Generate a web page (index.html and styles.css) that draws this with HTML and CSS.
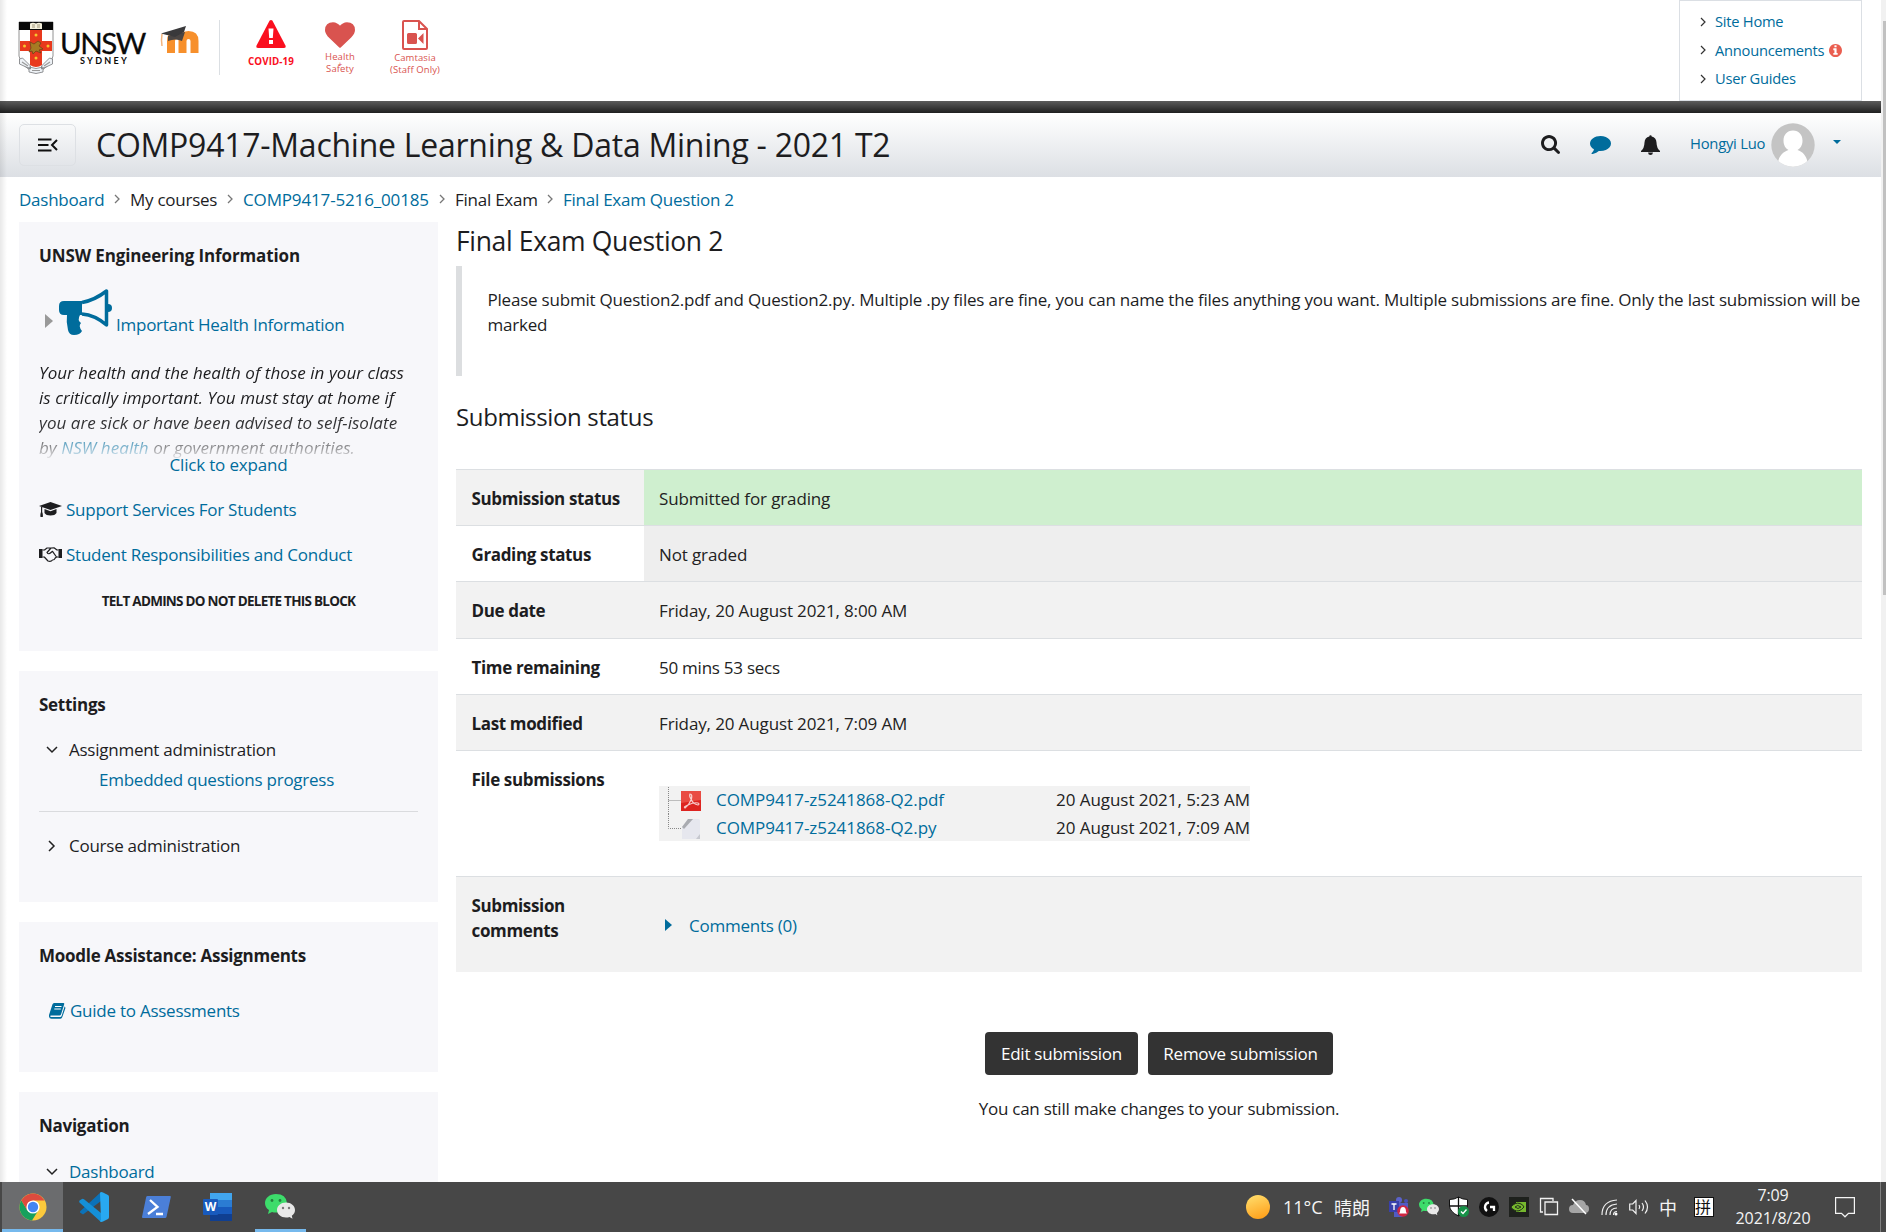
FILE: index.html
```html
<!DOCTYPE html>
<html lang="en">
<head>
<meta charset="utf-8">
<title>Final Exam Question 2</title>
<link rel="stylesheet" href="styles.css">
</head>
<body>
<div class="screen">
<div class="browser">
<div class="page">
  <header class="top">
    <svg class="crest" viewBox="0 0 34 52"><path d="M0 0h34v34q-2 11-17 17Q2 45 0 34z" fill="#fff" stroke="#777" stroke-width=".8"/><path d="M0 0h34v8H0z" fill="#080808"/><path d="M11 1.500q3-1.500 6 0 3-1.500 6 0v5.500H11z" fill="#f5f0dc"/><path d="M13 3h3M18 3h3M13 5h3M18 5h3" stroke="#8b8060" stroke-width=".8"/><path d="M11 8h12v11h10v10H23v14q-6 4-12 0V29H1V19h10z" fill="#e8391d"/><path d="M11 20l4 2 4-3 3 2-2 3 4 3-4 1 2 3-5-2-3 3-1-3-3 1 2-4z" fill="#a67b23" stroke="#63401a" stroke-width=".7"/><g fill="#f7c52d"><circle cx="17" cy="13" r="1.500"/><circle cx="5.500" cy="24" r="1.500"/><circle cx="29" cy="24" r="1.500"/><circle cx="17" cy="36" r="1.500"/></g><path d="M.5 37l3-1 8 8v3L.5 42zM33.500 37l-3-1-8 8v3l11-5zM10 45q7 3 14 0v5q-7 3-14 0z" fill="#eef2f6" stroke="#77797c" stroke-width=".8"/><path d="M3 40l6 4M31 40l-6 4M13 48.500h8" stroke="#999" stroke-width="1.200"/></svg>
    <div class="brand"><span class="unsw">UNSW</span><span class="sydney">SYDNEY</span></div>
    <svg class="moodle" viewBox="0 0 41 28"><path d="M11 27V15q0-6 6-6 5.500 0 5.500 6v12M22.500 15q0-6 6-6t6 6v12" fill="none" stroke="#f7902c" stroke-width="8"/><path d="M8 10v5q8-3 14 0l3-9z" fill="#4a4543"/><path d="M1 7.500L26 0l-2 6-9 5z" fill="#39393b"/><path d="M2 8q-1 6 0 12" fill="none" stroke="#f3b37c" stroke-width="1.500"/></svg>
    <div class="divider"></div>
    <div class="quick covid"><svg viewBox="0 0 30 28"><path d="M13.500.8q1.500-1.600 3 0L29.700 26q.5 2-1.700 2H2q-2.200 0-1.700-2z" fill="#fa0f1e"/><path d="M12.500 8.500h5l-.7 9.500h-3.600zM13 20h4v4h-4z" fill="#fff"/></svg><span>COVID-19</span></div>
    <div class="quick health"><svg viewBox="0 128 1792 1536"><path fill="#d9534f" d="M896 1664q-26 0-44-18l-624-602q-10-8-27.500-26t-55.500-65.500-68-97.500-53.500-121-23.500-138q0-220 127-344t351-124q62 0 126.500 21.500t120 58 95.500 68.500 76 68q36-36 76-68t95.500-68.500 120-58 126.500-21.500q224 0 351 124t127 344q0 221-229 450l-623 600q-18 18-44 18z"/></svg><span>Health</span><span class="plus">+</span><span>Safety</span></div>
    <div class="quick camtasia"><svg viewBox="0 0 26 30"><path d="M2 1h15l8 8v19q0 1-1 1H2q-1 0-1-1V2q0-1 1-1zM17 1v8h8" fill="none" stroke="#d9534f" stroke-width="2"/><path d="M5 14.500q0-1.500 1.500-1.500h7q1.500 0 1.500 1.500v8q0 1.500-1.500 1.500h-7Q5 24 5 22.500zM16 18.500l5.500-5.500v11z" fill="#d9534f"/></svg><span>Camtasia</span><span>(Staff Only)</span></div>
    <nav class="links">
      <a><svg viewBox="0 0 6 10"><path d="M1 1l4 4-4 4"/></svg>Site Home</a>
      <a><svg viewBox="0 0 6 10"><path d="M1 1l4 4-4 4"/></svg><span class="ann">Announcements</span><svg class="info" viewBox="128 128 1536 1536"><path d="M1152 1376v-160q0-14-9-23t-23-9h-96v-512q0-14-9-23t-23-9h-320q-14 0-23 9t-9 23v160q0 14 9 23t23 9h96v320h-96q-14 0-23 9t-9 23v160q0 14 9 23t23 9h448q14 0 23-9t9-23zm-128-896v-160q0-14-9-23t-23-9h-192q-14 0-23 9t-9 23v160q0 14 9 23t23 9h192q14 0 23-9t9-23zm640 416q0 209-103 385.500t-279.500 279.500-385.500 103-385.500-103-279.500-279.500-103-385.500 103-385.500 279.500-279.500 385.500-103 385.500 103 279.500 279.500 103 385.500z"/></svg></a>
      <a><svg viewBox="0 0 6 10"><path d="M1 1l4 4-4 4"/></svg>User Guides</a>
    </nav>
  </header>
  <div class="bar"></div>
  <div class="coursebar">
    <div class="drawer"><svg viewBox="0 0 20 14"><path d="M0 1.500h13.500M0 7h10.500M0 12.500h13.500M19 2l-5 5 5 5" fill="none" stroke="#111" stroke-width="2"/></svg></div>
    <h1>COMP9417-Machine Learning &amp; Data Mining - 2021 T2</h1>
    <svg class="search" viewBox="64 128 1664 1664"><path fill="#1d1d1f" d="M1216 832q0-185-131.500-316.500t-316.500-131.500-316.500 131.500-131.500 316.500 131.500 316.500 316.500 131.500 316.500-131.500 131.500-316.500zm512 832q0 52-38 90t-90 38q-54 0-90-38l-343-342q-179 124-399 124-143 0-273.500-55.500t-225-150-150-225-55.500-273.500 55.500-273.500 150-225 225-150 273.500-55.500 273.500 55.500 225 150 150 225 55.500 273.500q0 220-124 399l343 343q37 37 37 90z"/></svg>
    <svg class="chat" viewBox="0 256 1792 1536"><path fill="#006c9c" d="M1792 896q0 174-120 321.500t-326 233-450 85.500q-70 0-145-8-198 175-460 242-49 14-114 22-17 2-30.500-9t-17.500-29v-1q-3-4-.5-12t2-10 4.500-9.500l6-9 7-8.500 8-9q7-8 31-34.500t34.500-38 31-39.500 32.500-51 27-59 26-76q-157-89-247.500-220t-90.500-281q0-130 71-248.500t191-204.500 286-136.500 348-50.500q244 0 450 85.500t326 233 120 321.500z"/></svg>
    <svg class="bell" viewBox="0 0 19 20"><path fill="#1d1d1f" d="M8.300 1.500a1.200 1.200 0 0 1 2.400 0q4.500 1 4.800 6 .2 6 3.500 8.500v1H0v-1q3.300-2.500 3.500-8.500.3-5 4.800-6zM7 17.500h5q-.3 2.500-2.500 2.500T7 17.500z"/></svg>
    <span class="user">Hongyi Luo</span>
    <svg class="avatar" viewBox="0 0 44 44"><defs><clipPath id="av"><circle cx="22" cy="22" r="21.700"/></clipPath></defs><g clip-path="url(#av)"><path d="M0 0h44v44H0z" fill="#c4c4c4"/><path d="M22 7.500c6 0 9.500 4.500 9.500 10 0 4.500-2 8-5 9.500 5 1.500 9 6 10 12q-5 5-14.500 5T7 39c1-6 5.500-10.500 10.500-12-3-1.500-5-5-5-9.500 0-5.500 3.500-10 9.500-10z" fill="#fff"/></g></svg>
    <i class="caret"></i>
  </div>
  <nav class="crumbs"><a class="c1">Dashboard</a><svg viewBox="0 0 6 10"><path d="M1 1l4 4-4 4"/></svg><span class="c2">My courses</span><svg viewBox="0 0 6 10"><path d="M1 1l4 4-4 4"/></svg><a class="c3">COMP9417-5216_00185</a><svg viewBox="0 0 6 10"><path d="M1 1l4 4-4 4"/></svg><span class="c4">Final Exam</span><svg viewBox="0 0 6 10"><path d="M1 1l4 4-4 4"/></svg><a>Final Exam Question 2</a></nav>
  <div class="cols">
    <aside class="side">
      <section class="block b1">
        <h3>UNSW Engineering Information</h3>
        <div class="important"><i class="tri"></i><svg viewBox="0 0 53 46"><path fill="#006c9c" d="M5 12h18v14h-2q-3 5 1 8-3 3 1 8-2 4-8 4-5 0-6-5-2-8-1-15H5q-5 0-5-5v-4q0-5 5-5z"/><path fill="none" stroke="#006c9c" stroke-width="3.500" stroke-linejoin="round" d="M23 13.500Q36 11 47.500 2v34Q36 26 23 25"/><path fill="#006c9c" d="M49 15a4 4 0 0 1 0 8z"/></svg><a>Important Health Information</a></div>
        <div class="excerpt">Your health and the health of those in your class<br>is critically important. You must stay at home if<br>you are sick or have been advised to self-isolate<br>by <a>NSW health</a> or government authorities.</div>
        <a class="expand">Click to expand</a>
        <div class="support"><svg viewBox="0 0 23 15"><path fill="#1d1d1f" d="M0 4L11.500 0 23 4 11.500 8zM5.500 7l6 2.200 6-2.200v4q-1.500 2.500-6 2.500T5.500 11zM2 5h1.200v5q1 2.500.6 5H1.500q-.5-2.500.5-5z"/></svg><a>Support Services For Students</a></div>
        <div class="conduct"><svg viewBox="0 0 23 15"><path fill="#1d1d1f" d="M0 2h3.500v9H0zM19.500 2H23v9h-3.500z"/><path fill="none" stroke="#1d1d1f" stroke-width="1.200" stroke-linejoin="round" d="M3.500 3h2L8 1h4l3-.2L18 3h1.500M3.500 10h1.800L9 14q3 1 4.500-1 2 0 2.500-1.700l1.500-1.300h2M12 1L8 5.500q1.500 2.500 4 0l1.500-1.200L17.500 10"/></svg><a>Student Responsibilities and Conduct</a></div>
        <p class="telt">TELT ADMINS DO NOT DELETE THIS BLOCK</p>
      </section>
      <section class="block b2">
        <h3>Settings</h3>
        <div class="tree first"><svg class="down" viewBox="0 0 12 8"><path d="M1 1l5 5 5-5"/></svg><span>Assignment administration</span></div>
        <a class="embedded">Embedded questions progress</a>
        <hr>
        <div class="tree"><svg class="right" viewBox="0 0 7 12"><path d="M1 1l5 5-5 5"/></svg><span>Course administration</span></div>
      </section>
      <section class="block b3">
        <h3>Moodle Assistance: Assignments</h3>
        <div class="guide"><svg viewBox="0 0 17 16"><path fill="#006c9c" d="M5 0h9.500q1 .2.700 1.300L12 11.500q-.4 1-1.500 1H2q-.8 0-.8.800t1 .8h9q1 0 1.400-1l3-9.500q1 .6.700 1.800L13.300 14q-.4 1.700-2 1.700H2.500Q.3 15.700 0 13.500V12L3.500 1.300Q4 .2 5 0z"/><path stroke="#fff" d="M6 3.500h6.500M5.300 6h6.500"/></svg><a>Guide to Assessments</a></div>
      </section>
      <section class="block b4">
        <h3>Navigation</h3>
        <div class="tree dash"><svg class="down" viewBox="0 0 12 8"><path d="M1 1l5 5 5-5"/></svg><a>Dashboard</a></div>
      </section>
    </aside>
    <main class="main">
      <h2>Final Exam Question 2</h2>
      <div class="intro">Please submit Question2.pdf and Question2.py. Multiple .py files are fine, you can name the files anything you want. Multiple submissions are fine. Only the last submission will be<br>marked</div>
      <h2 class="h-status">Submission status</h2>
      <div class="table">
        <div class="row odd"><b>Submission status</b><div class="green">Submitted for grading</div></div>
        <div class="row"><b>Grading status</b><div class="grey">Not graded</div></div>
        <div class="row odd"><b>Due date</b><div>Friday, 20 August 2021, 8:00 AM</div></div>
        <div class="row"><b>Time remaining</b><div class="remaining">50 mins 53 secs</div></div>
        <div class="row odd"><b>Last modified</b><div>Friday, 20 August 2021, 7:09 AM</div></div>
        <div class="row files"><b>File submissions</b><div><div class="filebox">
          <svg class="twig" viewBox="0 0 14 28"><path d="M.5 1v27M.5 14.500H14" fill="none" stroke="#888" stroke-dasharray="1 1"/></svg><svg class="ficon" viewBox="0 0 20 20"><path d="M0 0h20v20H0z" fill="#dd2420"/><path d="M0 0h20v9L0 12z" fill="#e94b43"/><path d="M9 3q3 0 1 6-2 5-6 8-2-1 3-3 6-3 10-2 2 1 0 2-5-1-7-6-2-3-1-5z" fill="none" stroke="#fff" stroke-opacity=".75" stroke-width="1.200"/></svg><a>COMP9417-z5241868-Q2.pdf</a><span>20 August 2021, 5:23 AM</span>
          <svg class="twig" viewBox="0 0 14 28"><path d="M.5 0v14.500H14" fill="none" stroke="#888" stroke-dasharray="1 1"/></svg><svg class="ficon" viewBox="0 0 20 20"><path d="M7 0h10q2 0 2 2v14l-3 4H1V8z" fill="#e6e7ee"/><path d="M7 0h5L3 10l-2-2z" fill="#a9abb0"/><path d="M19 15v5h-4z" fill="#c6c8cf"/></svg><a>COMP9417-z5241868-Q2.py</a><span>20 August 2021, 7:09 AM</span>
        </div></div></div>
        <div class="row odd comments"><b>Submission<br>comments</b><div><i></i><a>Comments (0)</a></div></div>
      </div>
      <div class="actions"><button class="edit">Edit submission</button><button class="remove">Remove submission</button></div>
      <p class="note">You can still make changes to your submission.</p>
    </main>
  </div>
</div>
<div class="scroll"><i></i></div>
</div>
<footer class="taskbar">
  <div class="app chrome"><svg viewBox="0 0 28 28"><circle cx="14" cy="14" r="13.500" fill="#fbc93c"/><path d="M2.300 7.200A13.500 13.500 0 0 0 13 27.500L19.500 17 14 14 8.200 17z" fill="#17a05d"/><path d="M2.300 7.200L8.300 17.500l5.700-10h11.700Q21 .5 14 .5T2.300 7.200z" fill="#dd4b3e"/><circle cx="14" cy="14" r="6.600" fill="#fff"/><circle cx="14" cy="14" r="5.200" fill="#4285f4"/></svg></div>
  <div class="app code"><svg viewBox="0 0 30 30"><path d="M22 0L2.500 18q-2 1-1.500 2.500l3 2L22 9z" fill="#0b72b9"/><path d="M22 30L1 11q-1.500-1-.5-2.500L3 7q1-.5 2 .3L22 21z" fill="#1590d8"/><path d="M21 1q1-1.500 3-.500l5 2.500q1 .5 1 2v20q0 1.500-1 2l-5 2.500q-2 1-3-.5l1-1z" fill="#28a9f1"/></svg></div>
  <div class="app ps"><svg viewBox="0 0 29 22"><path d="M5.500 0H28q1 0 .8 1L24.500 21q-.3 1-1.500 1H1Q0 22 0 21L4.200 1q.3-1 1.300-1z" fill="#4b7fd8"/><path d="M8 4l7.500 7L6 18M14 18h7" fill="none" stroke="#fff" stroke-width="2.300"/></svg></div>
  <div class="app word"><svg viewBox="0 0 29 28"><path d="M7 0h22v7H7z" fill="#41a5ee"/><path d="M7 7h22v7H7z" fill="#2b7cd3"/><path d="M7 14h22v7H7z" fill="#185abd"/><path d="M7 21h22v7H7z" fill="#103f91"/><rect y="6" width="15" height="16" rx="1" fill="#185abd"/><text x="7.500" y="18" text-anchor="middle">W</text></svg></div>
  <div class="app wechat"><svg viewBox="0 0 30 25"><path d="M11 0C4.500 0 0 4 0 9q0 4.500 4 7l-1 4 4-2q2 .6 5 .5Q22 17 22 9 21 0 11 0z" fill="#3ddc6b"/><path d="M21 8.500c-5 0-9 3.200-9 7.500s4 7.500 9 7.500q2 0 3.500-.5l3 1.700-.7-3Q30 19.500 30 16c0-4.300-4-7.500-9-7.500z" fill="#e8e8e8"/><g fill="#24803e"><circle cx="7" cy="6.500" r="1.400"/><circle cx="15" cy="6.500" r="1.400"/></g><g fill="#777"><circle cx="18" cy="14" r="1.200"/><circle cx="24" cy="14" r="1.200"/></g></svg></div>
  <i class="sun"></i><span class="weather">11°C</span><span class="sky">晴朗</span>
  <div class="tray">
    <svg viewBox="0 0 20 20"><circle cx="10" cy="3" r="3" fill="#5b62c9"/><circle cx="17" cy="4" r="2" fill="#4850b5"/><path d="M5 6h14v9l-6 5H5z" fill="#515bc4"/><path d="M0 4h10v11H0z" fill="#3940ab"/><path d="M2.500 7h5M5 7v6" stroke="#fff" stroke-width="1.300"/><circle cx="14" cy="14" r="5.800" fill="#cf2742"/><path d="M14 10q3 0 3 5l1 1.500h-8l1-1.500q0-5 3-5z" fill="#fff"/></svg>
    <svg viewBox="0 0 30 25"><path d="M11 0C4.500 0 0 4 0 9q0 4.500 4 7l-1 4 4-2q2 .6 5 .5Q22 17 22 9 21 0 11 0z" fill="#3ddc6b"/><path d="M21 8.500c-5 0-9 3.200-9 7.500s4 7.500 9 7.500q2 0 3.500-.5l3 1.700-.7-3Q30 19.500 30 16c0-4.300-4-7.500-9-7.500z" fill="#e8e8e8"/><g fill="#24803e"><circle cx="7" cy="6.500" r="1.400"/><circle cx="15" cy="6.500" r="1.400"/></g><g fill="#777"><circle cx="18" cy="14" r="1.200"/><circle cx="24" cy="14" r="1.200"/></g></svg>
    <svg viewBox="0 0 20 20"><path d="M9.500 0q4 2.500 9 2.500V9q-1 6.500-9 10Q1 15 .5 9V2.500q5 0 9-2.500z" fill="#fff" stroke="#111"/><path d="M9.500 0v19M.5 9h18" stroke="#111" stroke-width="1.300"/><circle cx="14.500" cy="14.500" r="5.500" fill="#169147"/><path d="M12 14.500l2 2 3.500-4" fill="none" stroke="#fff" stroke-width="1.400"/></svg>
    <svg viewBox="0 0 20 20"><circle cx="10" cy="10" r="10" fill="#111"/><path d="M10 5.500A4.700 4.700 0 0 0 8 14M11 10h4v4" fill="none" stroke="#fff" stroke-width="2.300"/></svg>
    <svg viewBox="0 0 20 20"><path d="M0 0h20v20H0z" fill="#1e211d"/><path d="M7 5h10v10H7z" fill="#76b82e"/><path d="M2 10q4-5 9-3.500 3 1 4 3.500-5 6-10 3Q3 12 2 10zm4 0q2.500-3 6 0-3 3-6 0z" fill="#76b82e" stroke="#24331a"/></svg>
    <svg viewBox="0 0 20 20"><path d="M4 15H1.500V1.500H14V4M6 5h12.500v12.500H6z" fill="none" stroke="#f1f1f1" stroke-width="1.300"/></svg>
    <svg viewBox="0 0 20 20"><path d="M4 16Q0 16 0 12t4-4q2-5 7-5t6 5q3 0 3 4t-4 4z" fill="#a5a5a5"/><path d="M3 2l14 15" stroke="#fff" stroke-width="1.500"/></svg>
    <svg viewBox="0 0 20 20"><path d="M3 18Q3 4 18 3M7 18Q7 8 18 7M11 18q0-7 7-7M14.500 18q0-3.500 3.500-3.500" fill="none" stroke="#eee" stroke-width="1.200"/><circle cx="17" cy="17" r="1.500" fill="#fff"/></svg>
    <svg viewBox="0 0 20 20"><path d="M.7 7h3L7 3.500v13L3.700 13h-3zM10 8q1.500 2 0 4M13 6q3 4 0 8M16 3.500q5 6.500 0 13" fill="none" stroke="#f1f1f1" stroke-width="1.200"/></svg>
  </div>
  <span class="ime">中</span><span class="pin">拼</span>
  <div class="clock"><span>7:09</span><span>2021/8/20</span></div>
  <svg class="notify" viewBox="0 0 20 21"><path d="M.6.600h18.800v15.800H13.500L10 19.800l-3.500-3.400H.6z" fill="none" stroke="#f5f5f5" stroke-width="1.200"/></svg>
  <i class="peek"></i>
</footer>
</div>
</body>
</html>
```
FILE: styles.css
```css
* { box-sizing: border-box; }
body { margin: 0; background: #fff; color: #1d1d1f; font: 17px/25px "Open Sans", "Noto Sans CJK SC", sans-serif; letter-spacing: -0.25px; overflow: hidden; }
h1, h2, h3, p { margin: 0; font-weight: 400; }
svg { display: block; flex: none; overflow: visible; }
a { color: #006c9c; text-decoration: none; }
.screen { display: grid; grid-template-rows: 1182px 50px; width: 1886px; height: 1232px; overflow: hidden; white-space: nowrap; }
.browser { display: flex; min-height: 0; overflow: hidden; }
.page { position: relative; width: 1881px; overflow: hidden; }
.page::before { content: ""; position: absolute; left: 0; top: 0; bottom: 0; width: 7px; z-index: 2; background: linear-gradient(90deg, rgba(0,0,0,.09), rgba(0,0,0,0)); }
.scroll { width: 5px; background: #f1f1f1; padding: 21px 0 0 2px; }
.scroll i { display: block; height: 574px; background: #c1c1c1; }

.top { display: flex; align-items: flex-start; height: 101px; padding-left: 19px; }
.crest { width: 34px; height: 52px; margin-top: 22px; }
.brand { display: flex; flex-direction: column; width: 84px; margin: 28px 0 0 7px; color: #0a0a0a; }
.unsw { font: 29.500px/29px Lato, sans-serif; letter-spacing: -1.500px; -webkit-text-stroke: .3px #0a0a0a; }
.sydney { font: 700 9px/10px Lato, sans-serif; letter-spacing: 2.300px; padding-left: 20px; margin-top: -1px; }
.moodle { width: 41px; height: 28px; margin: 26px 0 0 16px; }
.divider { width: 1px; height: 55px; margin: 20px 0 0 18px; background: #dbdfe3; }
.quick { display: flex; flex-direction: column; align-items: center; font-size: 9.500px; line-height: 12px; color: #d9534f; letter-spacing: .1px; }
.covid { width: 60px; margin: 20px 0 0 21px; color: #fa0f1e; font-size: 9.800px; font-weight: 700; }
.covid svg { width: 30px; height: 28px; margin-bottom: 8px; }
.health { width: 60px; margin: 22px 0 0 9px; }
.health svg { width: 30px; height: 26px; margin-bottom: 3px; }
.plus { height: 0; line-height: 1px; font-size: 8px; }
.camtasia { width: 60px; margin: 20px 0 0 15px; }
.camtasia svg { width: 26px; height: 30px; margin-bottom: 2px; }
.links { display: flex; flex-direction: column; gap: 3.500px; width: 183px; height: 101px; margin: 0 19px 0 auto; padding: 8px 0 0 20px; border: 1px solid #dbdfe4; font-size: 14.700px; }
.links a { display: flex; align-items: center; }
.links svg { width: 6px; height: 10px; margin-right: 9px; fill: none; stroke: #333; stroke-width: 1.200; }
.links .info { width: 13px; height: 13px; margin-left: 5px; fill: #ea5e50; stroke: none; }
.bar { height: 12px; background: linear-gradient(#5c5c5c, #1f1f1f); }
.coursebar { display: flex; align-items: center; height: 64px; padding-left: 19px; background: linear-gradient(#fff, #dcdfe4); }
.drawer { width: 57px; height: 42px; border: 1px solid #dde0e4; border-radius: 5px; padding: 13px 0 0 18px; }
.drawer svg { width: 20px; height: 14px; }
h1 { width: 1443px; height: 38px; margin-left: 20px; font-size: 32px; line-height: 38px; letter-spacing: -.25px; overflow: hidden; }
.search { width: 19px; height: 19px; margin: -1px 0 0 2px; }
.chat { width: 21px; height: 18px; margin: -1px 0 0 30px; }
.bell { width: 19px; height: 20px; margin: -1px 0 0 30px; }
.user { width: 81px; margin: -4px 0 0 30px; font-size: 14.800px; color: #006c9c; }
.avatar { width: 44px; height: 44px; }
.caret { margin: -6px 0 0 18px; border: 4.500px solid transparent; border-top-color: #006c9c; border-bottom: 0; }
.crumbs { display: flex; align-items: center; height: 45px; padding: 2px 0 2px 19px; }
.crumbs svg { width: 6px; height: 10px; margin: -2px 10px 0; fill: none; stroke: #777; stroke-width: 1.300; }
.c1 { width: 85px; } .c2 { width: 87px; } .c3 { width: 186px; letter-spacing: -.15px; } .c4 { width: 82px; }
.cols { display: flex; gap: 18px; padding-left: 19px; }
.side { width: 419px; flex: none; }
.block { background: #f7f7fa; margin-bottom: 20px; padding: 21px 20px 0; }
.b1 { height: 429px; } .b2 { height: 231px; } .b3 { height: 150px; } .b4 { height: 150px; }
h3 { font-size: 17px; line-height: 25px; font-weight: 700; letter-spacing: -.27px; }
.b1 h3 { letter-spacing: -.13px; }
.important { display: flex; align-items: flex-end; height: 50px; margin-top: 19px; padding-left: 6px; }
.tri { border: 7.500px solid transparent; border-left: 8px solid #999; border-right: 0; margin: 0 6px 9px 0; }
.important svg { width: 53px; height: 46px; margin: 0 4px 2px 0; }
.excerpt { height: 98px; margin: 23px 0 -6px; line-height: 25px; font-style: italic; letter-spacing: .05px; overflow: hidden; -webkit-mask-image: linear-gradient(#000 50px, rgba(0,0,0,.85) 72px, rgba(0,0,0,.45) 88px, rgba(0,0,0,.1)); mask-image: linear-gradient(#000 50px, rgba(0,0,0,.85) 72px, rgba(0,0,0,.45) 88px, rgba(0,0,0,.1)); }
.expand { display: block; text-align: center; letter-spacing: -.17px; }
.support, .conduct { display: flex; margin-top: 20px; }
.support svg, .conduct svg { width: 23px; height: 15px; margin: 5px 4px 0 0; }
.telt { margin-top: 22px; text-align: center; font-size: 13.500px; font-weight: 700; letter-spacing: -.74px; }
.tree { display: flex; align-items: center; }
.tree svg { fill: none; stroke: #222; stroke-width: 1.500; }
.down { width: 12px; height: 8px; margin: 0 11px 0 7px; }
.right { width: 7px; height: 12px; margin: 0 14px 0 9px; }
.first { margin-top: 20px; }
.embedded { display: block; margin: 5px 0 0 60px; }
hr { border: 0; height: 1px; background: #dadbde; margin: 19px 0 21px; }
.guide { display: flex; margin: 30px 0 0 10px; }
.guide svg { width: 17px; height: 16px; margin: 5px 4px 0 0; }
.dash { margin-top: 21px; }

.main { width: 1406px; }
h2 { font-size: 26.500px; line-height: 36px; letter-spacing: -.35px; }
.main h2:first-child { padding-top: 1px; margin-bottom: -1px; }
.intro { height: 110px; margin-top: 8px; border-left: 6px solid #dcdee0; padding: 21px 0 0 25.500px; letter-spacing: -.21px; }
.h-status { margin: 23px 0 34px; font-size: 24px; }
.row { display: grid; grid-template-columns: 188px 1fr; height: 56.200px; border-top: 1px solid #dcdfe2; }
.row > * { padding: 16px 15px 0; }
.row > div { color: #222; letter-spacing: -.13px; }
.row > .remaining { letter-spacing: -.25px; }
.odd { background: #f2f2f2; }
.row .green { background: #cfefcf; }
.row .grey { background: #eee; }
.row > b { padding-left: 15.500px; letter-spacing: -.36px; }
.files { height: 126px; }
.files > div { padding-top: 35px; }
.filebox { display: grid; grid-template-columns: 14px 34px 340px 1fr; grid-template-rows: 28px 27px; width: 591px; height: 55px; padding-left: 9px; background: #f2f2f2; letter-spacing: -.05px; }
.twig { width: 14px; height: 28px; }
.ficon { width: 20px; height: 20px; margin: 5px 0 0 -1px; }
.filebox > a, .filebox > span { line-height: 28px; }
.comments { height: 96px; }
.row.comments > div { display: flex; padding: 36px 0 0 21px; letter-spacing: -.25px; }
.comments i { height: 0; margin: 6px 17px 0 0; border: 6px solid transparent; border-left: 7px solid #006c9c; border-right: 0; }
.actions { display: flex; justify-content: center; gap: 10px; margin-top: 60px; }
button { height: 43px; padding: 1px 0 0; border: 0; border-radius: 4px; background: #333; color: #fff; font: inherit; letter-spacing: -.25px; }
.edit { width: 153px; } .remove { width: 185px; }
.note { margin-top: 21px; text-align: center; }

.taskbar { display: flex; align-items: center; background: #474747; color: #f4f4f4; }
.app { display: flex; align-items: center; justify-content: center; height: 50px; }
.chrome { width: 61px; margin-left: 2px; background: #6b6c6e; border-bottom: 3px solid #76b9ed; padding-top: 2px; }
.chrome svg { width: 28px; height: 28px; }
.code { width: 62px; } .code svg { width: 30px; height: 30px; }
.ps { width: 62px; } .ps svg { width: 29px; height: 22px; }
.word { width: 62px; padding-right: 1px; } .word svg { width: 29px; height: 28px; }
.word text { font: 700 12px "Open Sans", sans-serif; fill: #fff; letter-spacing: 0; }
.wechat { width: 51px; margin-left: 6px; border-bottom: 3px solid #76b9ed; padding: 2px 2px 0 0; }
.wechat svg { width: 30px; height: 25px; }
.sun { width: 24px; height: 24px; margin-left: 940px; border-radius: 50%; background: linear-gradient(160deg, #ffe070, #ff9a12); }
.weather { width: 51px; margin-left: 13px; font-size: 18px; letter-spacing: 0; }
.sky { width: 55px; font: 18px "Noto Sans CJK SC", sans-serif; letter-spacing: 0; }
.tray { display: flex; gap: 10px; }
.tray svg { width: 20px; height: 20px; }
.ime { width: 18px; margin-left: 10px; font: 18px "Noto Sans CJK SC", sans-serif; letter-spacing: 0; }
.pin { width: 20px; height: 20px; margin-left: 17px; background: #fff; border: 1px solid #111; color: #111; font: 16px/17px "Noto Sans CJK SC", sans-serif; letter-spacing: 0; }
.clock { display: flex; flex-direction: column; align-items: center; width: 90px; margin-left: 14px; font-size: 16px; line-height: 23px; letter-spacing: -.1px; }
.notify { width: 20px; height: 21px; margin-left: 17px; }
.peek { width: 1px; height: 50px; margin-left: 25px; background: #808080; }
```
